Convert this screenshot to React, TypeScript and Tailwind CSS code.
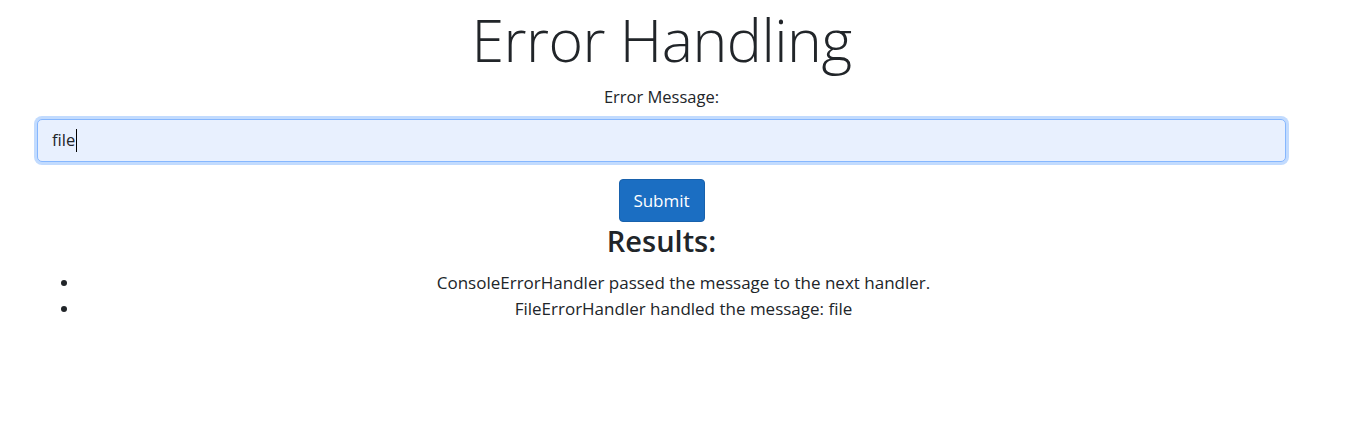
import React from "react";

export default function App() {
  return (
    <div className="w-[1352px] h-[447px] bg-white text-[#212529] font-['Open_Sans',sans-serif]">
      <div className="ml-[37px] w-[1249px] text-center">
        <h1 className="text-[59px] font-light leading-[78px] tracking-[-0.5px]">Error Handling</h1>
        <div className="text-[16.5px] leading-[24px] mt-[7px]">Error Message:</div>
        <div className="mt-[10px] w-[1249px] h-[43px] flex items-center px-[14px] bg-[#e8f0fe] border border-[#86b7fe] rounded-[5px] shadow-[0_0_0_3px_#c2dbfe] text-[16.5px] text-left">
          <span>file</span>
          <span className="w-px h-[23px] bg-black ml-[1px]" />
        </div>
        <div className="flex justify-center mt-[17px]">
          <button className="w-[86px] h-[43px] bg-[#1b6ec2] border border-[#1861ac] rounded-[4px] text-white text-[17px]">Submit</button>
        </div>
        <h3 className="text-[29px] font-semibold leading-[38px] mt-[0px]">Results:</h3>
      </div>
      <ul className="list-disc ml-[80px] w-[1207px] text-center text-[17px] leading-[26px] mt-[10px]">
        <li>ConsoleErrorHandler passed the message to the next handler.</li>
        <li>FileErrorHandler handled the message: file</li>
      </ul>
    </div>
  );
}
